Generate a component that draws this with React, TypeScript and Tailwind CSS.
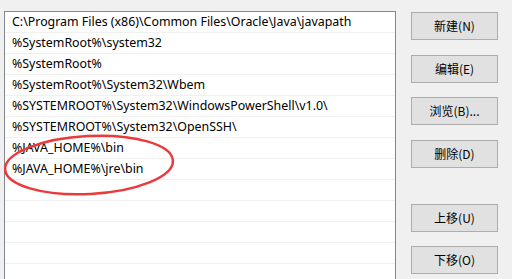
const paths = [
  "C:\\Program Files (x86)\\Common Files\\Oracle\\Java\\javapath",
  "%SystemRoot%\\system32",
  "%SystemRoot%",
  "%SystemRoot%\\System32\\Wbem",
  "%SYSTEMROOT%\\System32\\WindowsPowerShell\\v1.0\\",
  "%SYSTEMROOT%\\System32\\OpenSSH\\",
  "%JAVA_HOME%\\bin",
  "%JAVA_HOME%\\jre\\bin",
  "",
  "",
  "",
  "",
  "",
];

const buttons = [
  { label: "新建(N)", mt: "mt-0" },
  { label: "编辑(E)", mt: "mt-[15px]" },
  { label: "浏览(B)...", mt: "mt-[14px]" },
  { label: "删除(D)", mt: "mt-[15px]" },
  { label: "上移(U)", mt: "mt-[36px]" },
  { label: "下移(O)", mt: "mt-[14px]" },
];

export default function App() {
  return (
    <div className="relative w-[512px] h-[279px] overflow-hidden bg-[#f0f0f0] flex pl-[4px] pt-[11px] font-['Segoe_UI','Noto_Sans','Noto_Sans_CJK_SC',sans-serif]">
      {/* List box */}
      <div className="w-[392px] h-[290px] shrink-0 border border-[#828790] bg-white">
        {paths.map((p, i) => (
          <div
            key={i}
            className="h-[21px] border-b border-[#f0f0f0] pl-[7px] flex items-center text-[12.4px] leading-none text-black whitespace-nowrap"
          >
            {p}
          </div>
        ))}
      </div>

      {/* Buttons */}
      <div className="ml-[15px] pt-[1px] flex flex-col">
        {buttons.map((b) => (
          <div
            key={b.label}
            className={`${b.mt} w-[87px] h-[28px] border border-[#adadad] bg-[#e1e1e1] flex items-center justify-center text-[12px] text-black font-['Noto_Sans_CJK_SC','Noto_Sans',sans-serif]`}
          >
            {b.label}
          </div>
        ))}
      </div>

      {/* Red annotation ellipse */}
      <svg className="absolute left-0 top-0 pointer-events-none" width="512" height="279">
        <ellipse
          cx="89"
          cy="165"
          rx="84"
          ry="29"
          transform="rotate(-3 89 165)"
          fill="none"
          stroke="#ec3a3c"
          strokeWidth="2.5"
        />
      </svg>
    </div>
  );
}
